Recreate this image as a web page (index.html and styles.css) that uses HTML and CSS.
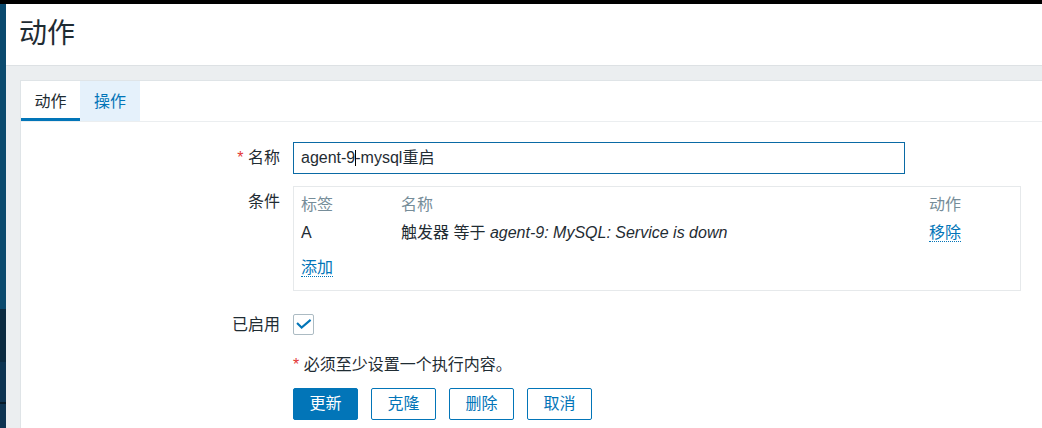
FILE: index.html
```html
<!DOCTYPE html>
<html lang="zh-CN">
<head>
<meta charset="utf-8">
<title>动作</title>
<link rel="stylesheet" href="styles.css">
</head>
<body>
<div class="topbar"></div>
<div class="app">
  <aside class="sidebar">
    <div class="seg seg-a"></div>
    <div class="seg seg-b"></div>
    <div class="seg seg-c"></div>
    <div class="seg seg-line"></div>
    <div class="seg seg-d"></div>
  </aside>
  <main class="main">
    <header class="page-header">
      <h1 class="page-title">动作</h1>
    </header>
    <div class="content">
      <div class="panel">
        <ul class="tabs">
          <li class="tab tab-active">动作</li>
          <li class="tab tab-link">操作</li>
        </ul>
        <div class="form">
          <div class="form-row row-name">
            <label class="form-label"><span class="req">*</span> 名称</label>
            <div class="form-field">
              <div class="textbox">agent-9<span class="caret"></span>-mysql重启</div>
            </div>
          </div>
          <div class="form-row row-cond">
            <label class="form-label label-top">条件</label>
            <div class="form-field">
              <div class="cond-box">
                <div class="cond-grid">
                  <div class="cond-head">标签</div>
                  <div class="cond-head">名称</div>
                  <div class="cond-head">动作</div>
                  <div class="cond-cell">A</div>
                  <div class="cond-cell">触发器 等于 <em>agent-9: MySQL: Service is down</em></div>
                  <div class="cond-cell"><a class="link">移除</a></div>
                </div>
                <div class="cond-add"><a class="link">添加</a></div>
              </div>
            </div>
          </div>
          <div class="form-row row-enabled">
            <label class="form-label label-check">已启用</label>
            <div class="form-field">
              <span class="checkbox">
                <svg width="19" height="19" viewBox="0 0 19 19"><polyline points="3.8,8.8 7.6,12.6 15.8,5.6" fill="none" stroke="#0275b8" stroke-width="2.1" stroke-linecap="square" stroke-linejoin="miter"/></svg>
              </span>
            </div>
          </div>
          <div class="form-row row-note">
            <div class="form-label"></div>
            <div class="form-field note"><span class="req">*</span> 必须至少设置一个执行内容。</div>
          </div>
          <div class="form-row row-buttons">
            <div class="form-label"></div>
            <div class="form-field buttons">
              <button class="btn btn-primary">更新</button>
              <button class="btn btn-alt">克隆</button>
              <button class="btn btn-alt">删除</button>
              <button class="btn btn-alt">取消</button>
            </div>
          </div>
        </div>
      </div>
    </div>
  </main>
</div>
</body>
</html>
```
FILE: styles.css
```css
* { box-sizing: border-box; }
html, body { margin: 0; padding: 0; }
body {
  width: 1042px;
  height: 428px;
  overflow: hidden;
  background: #ebeef0;
  font-family: "Liberation Sans", Arial, "Noto Sans CJK SC", sans-serif;
  font-size: 16px;
  color: #1f2c33;
}
.topbar { height: 4px; background: #000; }
.app { display: flex; height: 424px; }
.sidebar { width: 6px; flex: none; display: flex; flex-direction: column; }
.seg-a { height: 305px; background: #0b4a6e; }
.seg-b { height: 53px; background: #0b2a40; }
.seg-c { height: 40px; background: #0d3452; }
.seg-line { height: 2px; background: #061a28; }
.seg-d { flex: 1; background: #0d3452; }

.main { flex: 1; display: flex; flex-direction: column; min-width: 0; }
.page-header {
  height: 62px;
  background: #fff;
  border-bottom: 1px solid #dde1e4;
  padding-left: 13px;
  display: flex;
  align-items: center;
}
.page-title { margin: 0; font-size: 28px; font-weight: normal; line-height: 36px; padding-bottom: 1px; }

.content { flex: 1; padding: 14px 0 0 14px; }
.panel {
  background: #fff;
  border: 1px solid #dfe4e7;
  border-right: 0;
  border-bottom: 0;
  height: 100%;
}
.tabs {
  list-style: none;
  margin: 0;
  padding: 0;
  display: flex;
  border-bottom: 1px solid #ebeef0;
}
.tab {
  height: 40px;
  padding: 11px 14px 0;
  line-height: 20px;
  font-size: 16px;
}
.tab-active { border-bottom: 3px solid #0275b8; color: #1f2c33; padding-left: 13.5px; padding-right: 13.5px; }
.tab-link { background: #e5f1fb; color: #0275b8; }

.form { padding-top: 20px; }
.form-row { display: flex; }
.form-label {
  width: 259px;
  flex: none;
  margin-right: 13px;
  text-align: right;
}
.form-field { flex: 1; min-width: 0; }
.req { color: #e33734; }

.row-name .form-label { line-height: 32px; }
.textbox {
  width: 612px;
  height: 32px;
  border: 1px solid #0a6aa5;
  padding: 0 7px;
  line-height: 30px;
  white-space: nowrap;
}
.caret {
  display: inline-block;
  width: 1px;
  height: 16px;
  margin-right: -1px;
  background: #000;
  vertical-align: -3px;
}

.row-cond { margin-top: 12px; }
.label-top { padding-top: 6px; line-height: 20px; }
.cond-box {
  width: 728px;
  border: 1px solid #e6e9eb;
  padding: 8px 7px 12px;
}
.cond-grid {
  display: grid;
  grid-template-columns: 100px 528px 1fr;
  line-height: 20px;
}
.cond-head { color: #768d99; padding-bottom: 8px; }
.cond-cell em { font-style: italic; }
.cond-add { margin-top: 15px; line-height: 20px; }
.link {
  color: #0275b8;
  border-bottom: 1px dotted #0275b8;
  cursor: pointer;
}

.row-enabled { margin-top: 23px; }
.label-check { line-height: 22px; }
.checkbox {
  display: flex;
  align-items: center;
  justify-content: center;
  width: 21px;
  height: 21px;
  border: 1px solid #acbbc3;
  border-radius: 2px;
}

.row-note { margin-top: 19px; }
.note { line-height: 20px; }

.row-buttons { margin-top: 13px; }
.buttons { display: flex; gap: 13px; }
.btn {
  height: 32px;
  padding: 0 15.5px;
  font-family: inherit;
  font-size: 16px;
  line-height: 30px;
  border: 1px solid #0275b8;
  border-radius: 2px;
  cursor: pointer;
}
.btn-primary { background: #0275b8; color: #fff; }
.btn-alt { background: #fff; color: #0275b8; }
```
